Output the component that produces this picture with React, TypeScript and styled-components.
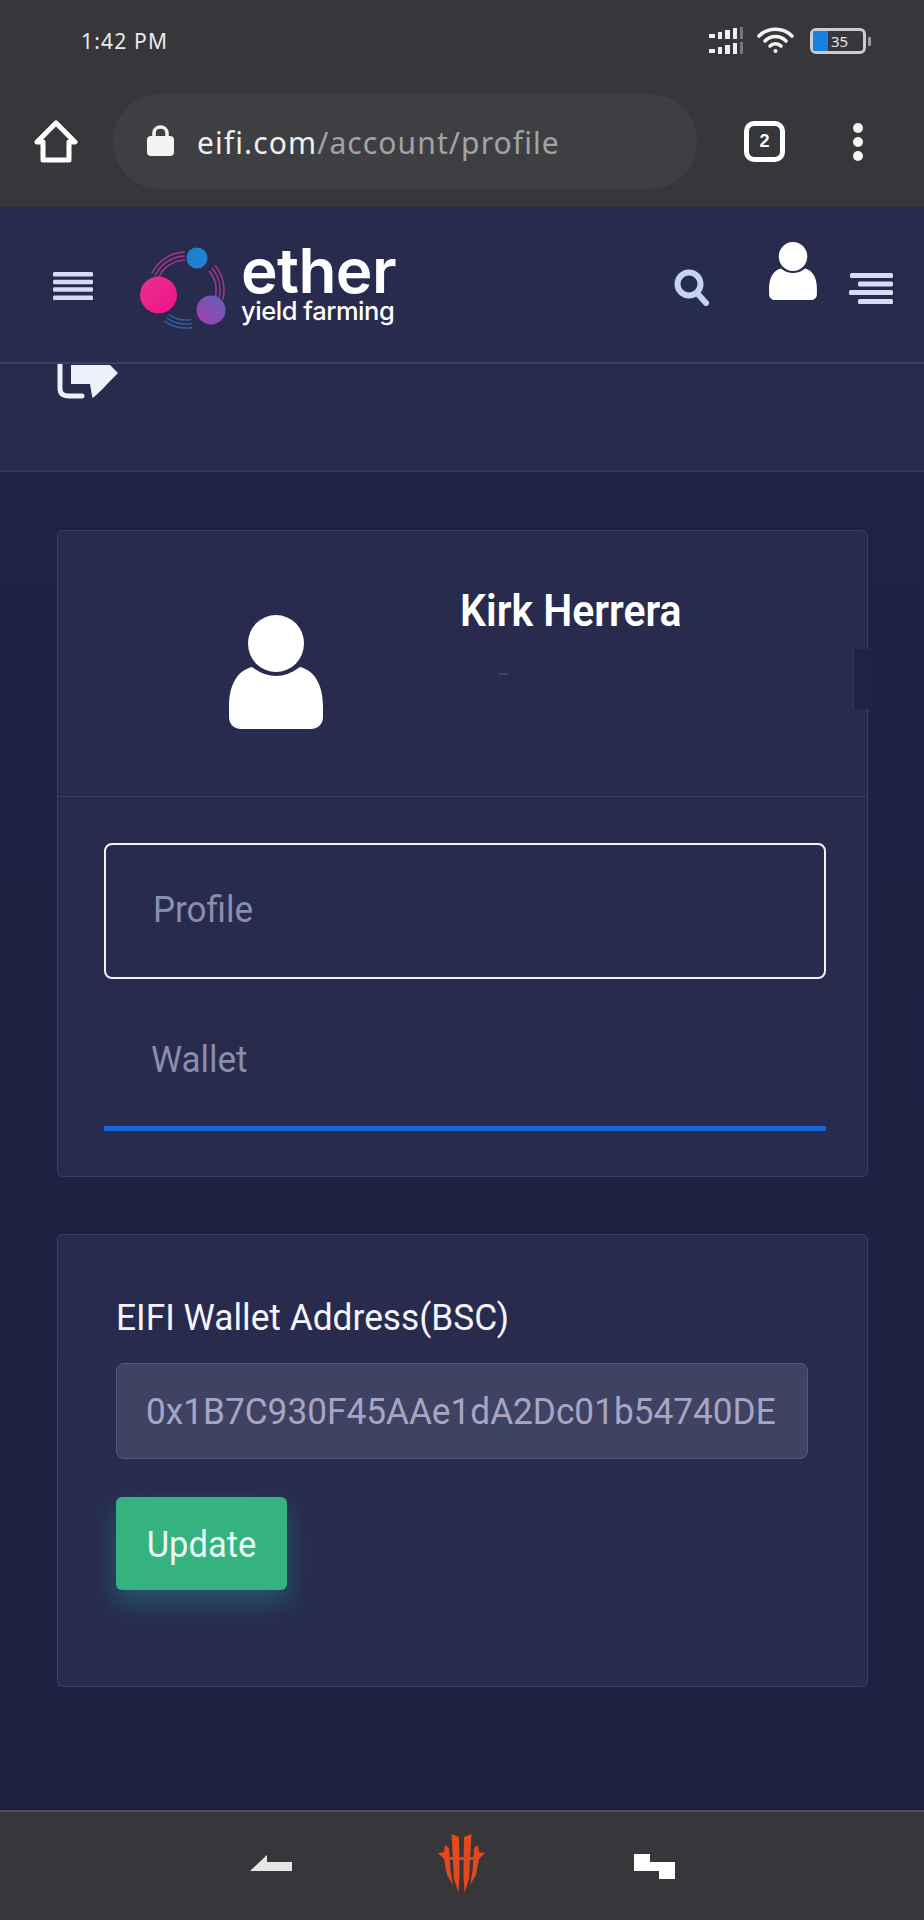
import React from "react";
import styled, { createGlobalStyle, css } from "styled-components";

const Global = createGlobalStyle`
  html, body { margin: 0; padding: 0; background: #1e2142; }
  * { box-sizing: border-box; }
`;

/* The reference photo is slightly stretched vertically, so its glyphs are taller than wide. */
const tall = css`
  display: inline-block;
  transform: scaleY(1.07);
`;

const Page = styled.div`
  width: 924px;
  height: 1920px;
  display: flex;
  flex-direction: column;
  overflow: hidden;
  font-family: Roboto, "Liberation Sans", sans-serif;
  background: #1e2142;
`;

const Chrome = styled.div`
  height: 207px;
  background: #36363b;
  flex: none;
`;

const StatusBar = styled.div`
  height: 94px;
  display: flex;
  align-items: flex-start;
  justify-content: space-between;
  padding: 27px 54px 0 81px;
`;

const Time = styled.div`
  font-family: "Noto Sans", sans-serif;
  font-size: 21px;
  line-height: 28px;
  color: #ececec;
  letter-spacing: 1.2px;
`;

const StatusIcons = styled.div`
  display: flex;
  align-items: center;
  gap: 13px;
  height: 27px;
`;

const Battery = styled.div`
  position: relative;
  width: 56px;
  height: 26px;
  margin-left: 3px;
  margin-right: 4px;
  border: 3px solid #c9ccd1;
  border-radius: 6px;
  display: flex;
  align-items: center;
  &::after {
    content: "";
    position: absolute;
    right: -8px;
    top: 6px;
    width: 3px;
    height: 9px;
    border-radius: 1px;
    background: #9a9a9d;
  }
`;

const BatteryFill = styled.div`
  width: 15px;
  height: 100%;
  background: #1a80e0;
  border-radius: 2px 0 0 2px;
`;

const BatteryText = styled.span`
  font-family: "Noto Sans", sans-serif;
  font-size: 15px;
  color: #e4e4e4;
  margin-left: 3px;
  line-height: 20px;
`;

const Toolbar = styled.div`
  display: flex;
  align-items: center;
  padding: 0 0 0 34px;
  height: 95px;
`;

const UrlBar = styled.div`
  width: 584px;
  height: 95px;
  margin-left: 35px;
  border-radius: 47px;
  background: #3e3f43;
  display: flex;
  align-items: center;
  padding-left: 34px;
  gap: 23px;
`;

const LockIcon = styled.svg`
  margin-bottom: 4px;
  flex: none;
`;

const UrlText = styled.div`
  font-family: "Noto Sans", sans-serif;
  font-size: 30px;
  color: #a3a3a5;
  letter-spacing: 1.1px;
  white-space: nowrap;
  padding-top: 2px;
  b {
    font-weight: 400;
    color: #f0f0f0;
  }
`;

const TabCount = styled.div`
  width: 41px;
  height: 41px;
  margin-left: 47px;
  border: 5px solid #fff;
  border-radius: 10px;
  display: flex;
  align-items: center;
  justify-content: center;
  color: #fff;
  font: 700 18px "Liberation Sans", sans-serif;
`;

const Dots = styled.div`
  margin-left: 68px;
  height: 38px;
  display: flex;
  flex-direction: column;
  justify-content: space-between;
`;

const Dot = styled.span`
  width: 10px;
  height: 10px;
  border-radius: 50%;
  background: #f5f5f5;
`;

const Header = styled.header`
  height: 157px;
  flex: none;
  background: #272b4d;
  border-bottom: 2px solid #3d4166;
  display: flex;
  align-items: flex-start;
  padding: 33px 31px 0 53px;
`;

const MenuIcon = styled.svg`
  display: block;
  margin-top: 32px;
  flex: none;
`;

const Logo = styled.div`
  display: flex;
  align-items: flex-start;
  margin-left: 31px;
`;

const LogoText = styled.div`
  margin-left: 15px;
  color: #fff;
  font-family: Inter, sans-serif;
  display: flex;
  flex-direction: column;
`;

const LogoName = styled.span`
  font-size: 62px;
  font-weight: 600;
  line-height: 61px;
  letter-spacing: -0.6px;
`;

const LogoTag = styled.span`
  font-size: 25.5px;
  font-weight: 500;
  line-height: 20px;
  letter-spacing: -0.45px;
`;

const HeaderRight = styled.div`
  margin-left: auto;
  display: flex;
  align-items: flex-start;
`;

const SearchIcon = styled.svg`
  margin-top: 29px;
`;

const HeaderUser = styled.svg`
  margin: 2px 0 0 59px;
`;

const RightMenu = styled.svg`
  margin: 33px 0 0 32px;
`;

const SubBar = styled.div`
  height: 108px;
  flex: none;
  background: #272b4d;
  border-bottom: 2px solid #343859;
  padding-left: 57px;
  overflow: hidden;
`;

const SubIcon = styled.svg`
  display: block;
`;

const Main = styled.main`
  flex: 1;
  padding: 58px 56px 0 57px;
  display: flex;
  flex-direction: column;
  gap: 57px;
  background: linear-gradient(#1e2244, #1d2040);
`;

const Card = styled.section`
  position: relative;
  background: #282b4e;
  border: 1.5px solid #3b3f62;
  border-radius: 6px;
`;

const ProfileHead = styled.div`
  height: 266px;
  border-bottom: 1.5px solid #373b5d;
  display: flex;
  align-items: flex-start;
  padding: 58px 0 0 171px;
`;

const Avatar = styled.svg`
  flex: none;
  margin-top: 26px;
`;

const NameBlock = styled.div`
  margin-left: 137px;
  display: flex;
  flex-direction: column;
`;

const Name = styled.h2`
  ${tall}
  margin: 0;
  font-size: 41px;
  line-height: 44px;
  font-weight: 600;
  color: #fff;
  white-space: nowrap;
`;

const Dash = styled.span`
  width: 9px;
  height: 1.5px;
  margin: 40px 0 0 39px;
  background: #3f4365;
`;

const Notch = styled.div`
  position: absolute;
  right: -2px;
  top: 118px;
  width: 16px;
  height: 60px;
  background: #1f2244;
  border-left: 1.5px solid #33375a;
`;

const Tabs = styled.div`
  padding: 46px 41px 45px 46px;
  display: flex;
  flex-direction: column;
`;

const ProfileTab = styled.div`
  height: 136px;
  border: 2px solid #f1f2f7;
  border-radius: 8px;
  display: flex;
  align-items: center;
  padding: 0 0 4px 47px;
  font-size: 35px;
  color: #8a8eae;
`;

const WalletTab = styled.div`
  height: 152px;
  border-bottom: 5px solid #1565d8;
  display: flex;
  align-items: center;
  padding: 14px 0 0 47px;
  font-size: 35px;
  color: #8a8eae;
`;

const TabLabel = styled.span`
  ${tall}
`;

const WalletCard = styled(Card)`
  height: 453px;
  padding: 60px 59px 0 58px;
`;

const FieldLabel = styled.label`
  ${tall}
  font-size: 35.3px;
  line-height: 44px;
  color: #f4f5f8;
`;

const Input = styled.div`
  margin-top: 24px;
  height: 96px;
  background: #3f4263;
  border: 1.5px solid #565a7c;
  border-radius: 8px;
  display: flex;
  align-items: center;
  padding-left: 29px;
  font-size: 35.2px;
  color: #a6a5c4;
  white-space: nowrap;
  overflow: hidden;
`;

const InputValue = styled.span`
  ${tall}
`;

const UpdateButton = styled.button`
  display: block;
  margin-top: 38px;
  width: 171px;
  height: 93px;
  border: 0;
  border-radius: 6px;
  background: #34b37f;
  color: #ecfbf5;
  font-family: Roboto, sans-serif;
  font-size: 34.5px;
  box-shadow: 0 12px 28px rgba(34, 190, 170, 0.32);
`;

const ButtonLabel = styled.span`
  ${tall}
`;

const BottomNav = styled.nav`
  height: 110px;
  flex: none;
  background: #36363b;
  border-top: 2px solid #4a4f63;
  display: flex;
  align-items: flex-start;
  padding: 21px 0 0 250px;
`;

const BackIcon = styled.svg`
  margin-top: 21px;
`;

const RedLogo = styled.svg`
  margin-left: 146px;
`;

const RecentIcon = styled.svg`
  margin: 21px 0 0 149px;
`;

const Person = () => (
  <>
    <ellipse cx="47" cy="28.5" rx="28" ry="28.5" fill="#fff" />
    <path
      d="M23 52 Q47 70 71 52 C86 56 94 70 94 92 L94 102 C94 110 88 114 82 114 L12 114 C6 114 0 110 0 102 L0 92 C0 70 8 56 23 52 Z"
      fill="#fff"
    />
  </>
);

const Bars = ({ rows }: { rows: [number, number][] }) => (
  <>
    {rows.map(([x, y], i) => (
      <rect key={i} x={x} y={y} width={44 - x} height="5" rx="1.5" fill="#d3ddf6" />
    ))}
  </>
);

const arc = (r: number, from: number, to: number) => {
  const rad = (d: number) => (d * Math.PI) / 180;
  const x = (d: number) => (62 + r * Math.cos(rad(d))).toFixed(1);
  const y = (d: number) => (50 + r * Math.sin(rad(d))).toFixed(1);
  return `M${x(from)} ${y(from)} A${r} ${r} 0 0 1 ${x(to)} ${y(to)}`;
};

const RING_RADII = [30, 34, 38];

export default function App() {
  return (
    <Page>
      <Global />
      <Chrome>
        <StatusBar>
          <Time>1:42 PM</Time>
          <StatusIcons>
            <svg width="35" height="27" viewBox="0 0 35 27">
              {[0, 15].map((y) => (
                <g key={y} fill="#eee">
                  <rect x="0" y={y + 7} width="6" height="4" />
                  <rect x="9" y={y + 5} width="4" height="7" />
                  <rect x="16" y={y + 3} width="5" height="9" />
                  <rect x="24" y={y + 1} width="4" height="11" />
                  <rect x="31" y={y} width="3" height="12" fill="#77777b" />
                </g>
              ))}
            </svg>
            <svg width="37" height="27" viewBox="0 0 37 27" fill="none" stroke="#f4f4f4" strokeWidth="3.6" strokeLinecap="round">
              <path d="M2 9 C11 0 26 0 35 9" />
              <path d="M8 14 C14 8 23 8 29 14" />
              <path d="M13 19 C16 16 21 16 24 19" />
              <circle cx="18.5" cy="24" r="2" fill="#f4f4f4" stroke="none" />
            </svg>
            <Battery>
              <BatteryFill />
              <BatteryText>35</BatteryText>
            </Battery>
          </StatusIcons>
        </StatusBar>
        <Toolbar>
          <svg width="44" height="43" viewBox="0 0 44 43" fill="none" stroke="#fff" strokeWidth="5" strokeLinejoin="round">
            <path d="M22 3 L41 22 L35 22 L35 40 L9 40 L9 22 L3 22 Z" />
          </svg>
          <UrlBar>
            <LockIcon width="27" height="32" viewBox="0 0 27 32">
              <path d="M7 14 V9 C7 1 20 1 20 9 V14" fill="none" stroke="#f4f4f4" strokeWidth="3.5" />
              <rect x="0" y="12" width="27" height="20" rx="4" fill="#f4f4f4" />
            </LockIcon>
            <UrlText>
              <b>eifi.com</b>/account/profile
            </UrlText>
          </UrlBar>
          <TabCount>2</TabCount>
          <Dots>
            <Dot />
            <Dot />
            <Dot />
          </Dots>
        </Toolbar>
      </Chrome>

      <Header>
        <MenuIcon width="40" height="28" viewBox="0 0 44 31" preserveAspectRatio="none">
          <Bars rows={[[0, 0], [0, 8.5], [0, 17], [0, 26]]} />
        </MenuIcon>
        <Logo>
          <svg width="102" height="92" viewBox="0 0 102 92" fill="none">
            <defs>
              <linearGradient id="pink" x1="0" y1="0" x2="1" y2="1">
                <stop offset="0" stopColor="#e8318f" />
                <stop offset="1" stopColor="#f0128c" />
              </linearGradient>
              <linearGradient id="violet" x1="0" y1="1" x2="1" y2="0">
                <stop offset="0" stopColor="#a53da8" />
                <stop offset="1" stopColor="#5f62bd" />
              </linearGradient>
            </defs>
            <g stroke="#a2358f" strokeWidth="1.5">
              {RING_RADII.map((r) => (
                <path key={r} d={arc(r, 205, 268)} />
              ))}
              {RING_RADII.map((r) => (
                <path key={r} d={arc(r, 320, 15)} />
              ))}
            </g>
            <g stroke="#2f5fa8" strokeWidth="1.5">
              {RING_RADII.map((r) => (
                <path key={r} d={arc(r, 80, 125)} />
              ))}
            </g>
            <circle cx="73" cy="18" r="10.5" fill="#1f80cf" />
            <circle cx="34.5" cy="55" r="18.5" fill="url(#pink)" />
            <circle cx="87" cy="70" r="14.5" fill="url(#violet)" />
          </svg>
          <LogoText>
            <LogoName>ether</LogoName>
            <LogoTag>yield farming</LogoTag>
          </LogoText>
        </Logo>
        <HeaderRight>
          <SearchIcon width="36" height="37" viewBox="0 0 36 37" fill="none" stroke="#c5d3f0">
            <circle cx="15" cy="15" r="11.5" strokeWidth="6" />
            <path d="M23 24 L32 34" strokeWidth="6" strokeLinecap="round" />
          </SearchIcon>
          <HeaderUser width="48" height="58" viewBox="0 0 94 114">
            <Person />
          </HeaderUser>
          <RightMenu width="44" height="31" viewBox="0 0 44 31">
            <Bars rows={[[1, 0], [9, 8.5], [0, 17], [9, 26]]} />
          </RightMenu>
        </HeaderRight>
      </Header>

      <SubBar>
        <SubIcon width="61" height="35" viewBox="0 0 61 35">
          <path d="M3 0 V24 C3 30 6 32 12 32 H25" fill="none" stroke="#eef0fa" strokeWidth="5" strokeLinecap="round" />
          <path d="M14 1 H53 L61 9 C50 20 44 27 37 33 C36 34 35 34 35 32 L33 20 H14 Z" fill="#eef0fa" />
        </SubIcon>
      </SubBar>

      <Main>
        <Card>
          <ProfileHead>
            <Avatar width="94" height="114" viewBox="0 0 94 114">
              <Person />
            </Avatar>
            <NameBlock>
              <Name>Kirk Herrera</Name>
              <Dash />
            </NameBlock>
          </ProfileHead>
          <Notch />
          <Tabs>
            <ProfileTab>
              <TabLabel>Profile</TabLabel>
            </ProfileTab>
            <WalletTab>
              <TabLabel>Wallet</TabLabel>
            </WalletTab>
          </Tabs>
        </Card>
        <WalletCard>
          <FieldLabel>EIFI Wallet Address(BSC)</FieldLabel>
          <Input>
            <InputValue>0x1B7C930F45AAe1dA2Dc01b54740DE</InputValue>
          </Input>
          <UpdateButton>
            <ButtonLabel>Update</ButtonLabel>
          </UpdateButton>
        </WalletCard>
      </Main>

      <BottomNav>
        <BackIcon width="42" height="18" viewBox="0 0 42 18">
          <path d="M0 17 L17 1 L17 8 L42 8 L42 17 Z" fill="#e6e6e4" />
        </BackIcon>
        <RedLogo width="47" height="60" viewBox="0 0 47 60" fill="#e4481d">
          <rect x="10" y="24" width="27" height="3" fill="#d8421b" />
          <path d="M13.5 1 L21 4 L21.5 42 L20.5 60 L16 46 Z" />
          <path d="M33.5 1 L26 4 L25.5 42 L26.5 60 L31 46 Z" />
          <path d="M7 12 L11 15 L12.5 38 L15 52 L9 42 L6 26 L0 20 L6 19 Z" />
          <path d="M40 12 L36 15 L34.5 38 L32 52 L38 42 L41 26 L47 20 L41 19 Z" />
        </RedLogo>
        <RecentIcon width="41" height="25" viewBox="0 0 41 25">
          <path d="M0 0 H16 V8 H41 V25 H25 V17 H0 Z" fill="#fff" />
        </RecentIcon>
      </BottomNav>
    </Page>
  );
}
